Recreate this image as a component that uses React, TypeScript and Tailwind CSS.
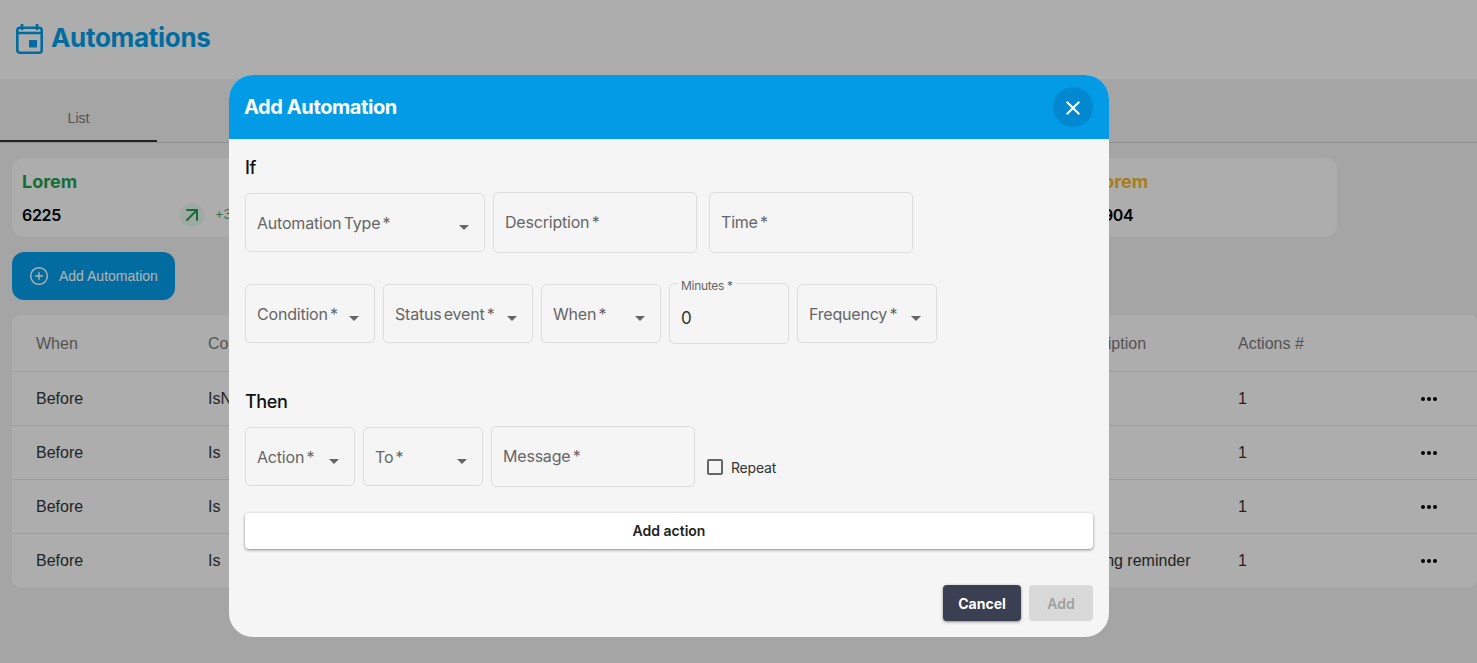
import { CirclePlus, ArrowUpRight } from "lucide-react";

const sans = "font-['Inter','Noto_Sans',sans-serif]";

const rows = [
  { when: "Before", condition: "IsNot", time: "09:00", description: "", actions: 1 },
  { when: "Before", condition: "Is", time: "09:00", description: "", actions: 1 },
  { when: "Before", condition: "Is", time: "09:00", description: "", actions: 1 },
  { when: "Before", condition: "Is", time: "09:00", description: "Meeting reminder", actions: 1 },
];

const cols = "grid grid-cols-[172px_858px_172px_1fr] items-center pl-6";
const labelText = "whitespace-nowrap text-[16px] tracking-[-0.2px] [word-spacing:-2px] text-[#666666]";

function Caret() {
  return (
    <svg viewBox="0 0 24 24" className="h-6 w-6 shrink-0 fill-[#666666]">
      <path d="M7 10l5 5 5-5z" />
    </svg>
  );
}

function SelectField({ label, width }: { label: string; width: string }) {
  return (
    <div className={`${width} flex h-[59px] items-center justify-between rounded-[5px] border border-[#dddddd] pl-[11px] pr-2`}>
      <span className={labelText}>{label}</span>
      <span className="mt-2"><Caret /></span>
    </div>
  );
}

function TextField({ label, width }: { label: string; width: string }) {
  return (
    <div className={`${width} flex h-[61px] items-center rounded-[5px] border border-[#dddddd] pb-[2px] pl-[11px]`}>
      <span className={labelText}>{label}</span>
    </div>
  );
}

function Card({ title, color, value, trend }: { title: string; color: string; value: string; trend?: boolean }) {
  return (
    <div className="h-[79px] w-[254px] rounded-xl bg-[#f8f8f8] px-[10px] pt-[13px]">
      <div className={`text-[18px] font-bold leading-[22px] ${color}`}>{title}</div>
      <div className="mt-[10px] flex h-6 items-center justify-between">
        <span className="text-[16px] font-semibold leading-5 tracking-[-0.3px] text-black">{value}</span>
        {trend && (
          <div className="flex items-center gap-[11px]">
            <span className="flex h-6 w-6 items-center justify-center rounded-full bg-[#e6f2ea]">
              <ArrowUpRight className="h-6 w-6 text-[#1f9d4d]" strokeWidth={2} />
            </span>
            <span className="w-[41px] text-[13px] text-[#4f9a6a]">+3%</span>
          </div>
        )}
      </div>
    </div>
  );
}

export default function App() {
  return (
    <div className={`relative h-[663px] w-full overflow-hidden bg-[#ececec] ${sans}`}>
      {/* Page behind the dialog */}
      <header className="flex h-[79px] items-center gap-[8px] bg-[#f8f8f8] pb-1 pl-[16px]">
        <svg viewBox="0 0 27 30" className="mt-[3px] h-[30px] w-[27px] fill-none stroke-[#039be5] stroke-[2.6]">
          <rect x="1.3" y="3.8" width="24.4" height="24.9" rx="2.5" />
          <path d="M1.3 9h24.4M6 0v6M21 0v6" />
          <rect x="13" y="16" width="8" height="7.5" fill="#039be5" stroke="none" />
        </svg>
        <h1 className="text-[26px] font-bold tracking-[-0.3px] text-[#039be5]">Automations</h1>
      </header>

      <div className="flex h-[64px] border-b border-[#d0d0d0]">
        <div className="flex w-[157px] items-center justify-center border-b-2 border-[#333333] pt-[17px] font-['Liberation_Sans',sans-serif] text-[14px] text-[#777777]">
          List
        </div>
      </div>

      <div className="ml-3 mt-[15px] flex w-[1325px] justify-between">
        <Card title="Lorem" color="text-[#1f9d4d]" value="6225" trend />
        <Card title="Lorem" color="text-[#f0b429]" value="3904" />
      </div>

      <button className="ml-3 mt-[15px] flex h-12 w-[163px] items-center gap-[10px] rounded-xl bg-[#039be5] pl-[17px] font-['Liberation_Sans',sans-serif] text-[14px] text-white">
        <CirclePlus className="h-5 w-5" strokeWidth={1.75} />
        Add Automation
      </button>

      <div className="ml-3 mt-[15px] overflow-hidden rounded-lg bg-[#f8f8f8] font-['Liberation_Sans',sans-serif] text-[16px]">
        <div className={`${cols} h-[57px] border-b border-[#e0e0e0] pt-[2px] text-[#777777]`}>
          <span>When</span>
          <span>Condition</span>
          <span>Description</span>
          <span>Actions #</span>
        </div>
        {rows.map((row, i) => (
          <div key={i} className={`${cols} h-[54px] border-b border-[#e0e0e0] text-[#333333] last:h-[53px] last:border-b-0`}>
            <span>{row.when}</span>
            <span>{row.condition}</span>
            <span>{row.description}</span>
            <div className="flex items-center justify-between pr-[36px]">
              <span>{row.actions}</span>
              <svg viewBox="0 0 24 24" className="mt-px h-6 w-6 fill-black">
                <circle cx="6" cy="12" r="2" />
                <circle cx="12" cy="12" r="2" />
                <circle cx="18" cy="12" r="2" />
              </svg>
            </div>
          </div>
        ))}
      </div>

      {/* Backdrop */}
      <div className="absolute inset-0 bg-black/30" />

      {/* Dialog */}
      <div className="absolute left-[229px] top-[75px] h-[562px] w-[880px] overflow-hidden rounded-3xl bg-[#f5f5f5]">
        <div className="flex h-16 items-center justify-between bg-[#039be5] pl-4 pr-4">
          <h2 className="-ml-px text-[20px] font-bold tracking-[-0.4px] text-white">Add Automation</h2>
          <button className="flex h-10 w-10 items-center justify-center rounded-full bg-[#0288d1]">
            <svg viewBox="0 0 24 24" className="mt-px h-6 w-6 fill-white">
              <path d="M19 6.41 17.59 5 12 10.59 6.41 5 5 6.41 10.59 12 5 17.59 6.41 19 12 13.41 17.59 19 19 17.59 13.41 12z" />
            </svg>
          </button>
        </div>

        <div className="px-4">
          <div className="mt-[17px] text-[18px] font-medium leading-6 tracking-[-0.4px] text-[#111111]">If</div>

          <div className="mt-[12px] flex items-center gap-2">
            <SelectField label="Automation Type *" width="w-[240px]" />
            <TextField label="Description *" width="w-[204px]" />
            <TextField label="Time *" width="ml-1 w-[204px]" />
          </div>

          <div className="mt-[30px] flex items-center gap-2">
            <SelectField label="Condition *" width="w-[130px]" />
            <SelectField label="Status event *" width="w-[150px]" />
            <SelectField label="When *" width="w-[120px]" />
            <div className="relative flex h-[61px] w-[120px] items-center rounded-[5px] border border-[#dddddd] pl-[11px] pt-[10px] text-[17px] text-[#333333]">
              <span className="absolute -top-[5px] left-[8px] bg-[#f5f5f5] px-[3px] text-[12px] leading-[14px] tracking-[-0.3px] text-[#666666]">
                Minutes *
              </span>
              0
            </div>
            <SelectField label="Frequency *" width="w-[140px]" />
          </div>

          <div className="mt-[46px] text-[18px] font-medium leading-6 tracking-[-0.4px] text-[#111111]">Then</div>

          <div className="mt-[12px] flex items-center gap-2">
            <SelectField label="Action *" width="w-[110px]" />
            <SelectField label="To *" width="w-[120px]" />
            <TextField label="Message *" width="w-[204px]" />
            <label className="ml-1 mt-[21px] flex items-center gap-2 text-[14px] tracking-[-0.2px] text-[#333333]">
              <span className="h-4 w-4 rounded-[2px] border-2 border-[#666666]" />
              Repeat
            </label>
          </div>

          <button className="mt-[26px] h-9 w-full rounded-[4px] bg-white pb-px text-[14px] font-semibold text-[#222222] shadow-[0_1px_3px_rgba(0,0,0,0.45)]">
            Add action
          </button>

          <div className="mt-9 flex justify-end gap-2">
            <button className="h-9 w-[78px] rounded-[4px] bg-[#3a3f51] text-[14px] font-bold text-white shadow-[0_1px_3px_rgba(0,0,0,0.45)]">
              Cancel
            </button>
            <button className="h-9 w-16 rounded-[4px] bg-[#d9d9d9] text-[14px] font-semibold text-[#a0a0a0]">Add</button>
          </div>
        </div>
      </div>
    </div>
  );
}
